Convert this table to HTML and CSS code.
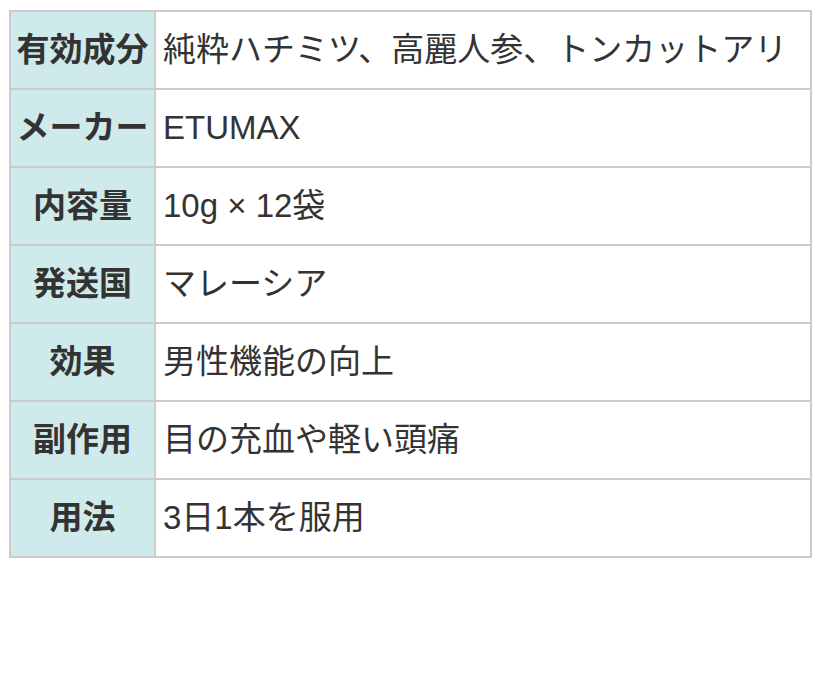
FILE: index.html
```html
<!DOCTYPE html>
<html lang="ja">
<head>
<meta charset="utf-8">
<link rel="stylesheet" href="styles.css">
</head>
<body>
<div class="wrap">
<table class="spec">
<tr><th>有効成分</th><td>純粋ハチミツ、高麗人参、トンカットアリ</td></tr>
<tr><th>メーカー</th><td>ETUMAX</td></tr>
<tr><th>内容量</th><td>10g × 12袋</td></tr>
<tr><th>発送国</th><td>マレーシア</td></tr>
<tr><th>効果</th><td>男性機能の向上</td></tr>
<tr><th>副作用</th><td>目の充血や軽い頭痛</td></tr>
<tr><th>用法</th><td>3日1本を服用</td></tr>
</table>
</div>
</body>
</html>
```

FILE: styles.css
```css
html, body {
  margin: 0;
  padding: 0;
  background: #fff;
}
.wrap {
  padding: 10px 0 0 9px;
}
.spec {
  border-collapse: collapse;
  width: 803px;
  font-family: "Liberation Sans", "Noto Sans CJK JP", sans-serif;
  font-size: 33px;
  color: #333;
}
.spec th, .spec td {
  border: 2px solid #cccccc;
  height: 78px;
  padding: 0 7px;
  box-sizing: border-box;
  line-height: 1.4;
}
.spec th {
  width: 145px;
  background: #cfeaea;
  font-weight: bold;
  text-align: center;
  padding: 0 4px;
  white-space: nowrap;
}
.spec td {
  text-align: left;
  background: #fff;
}
```
